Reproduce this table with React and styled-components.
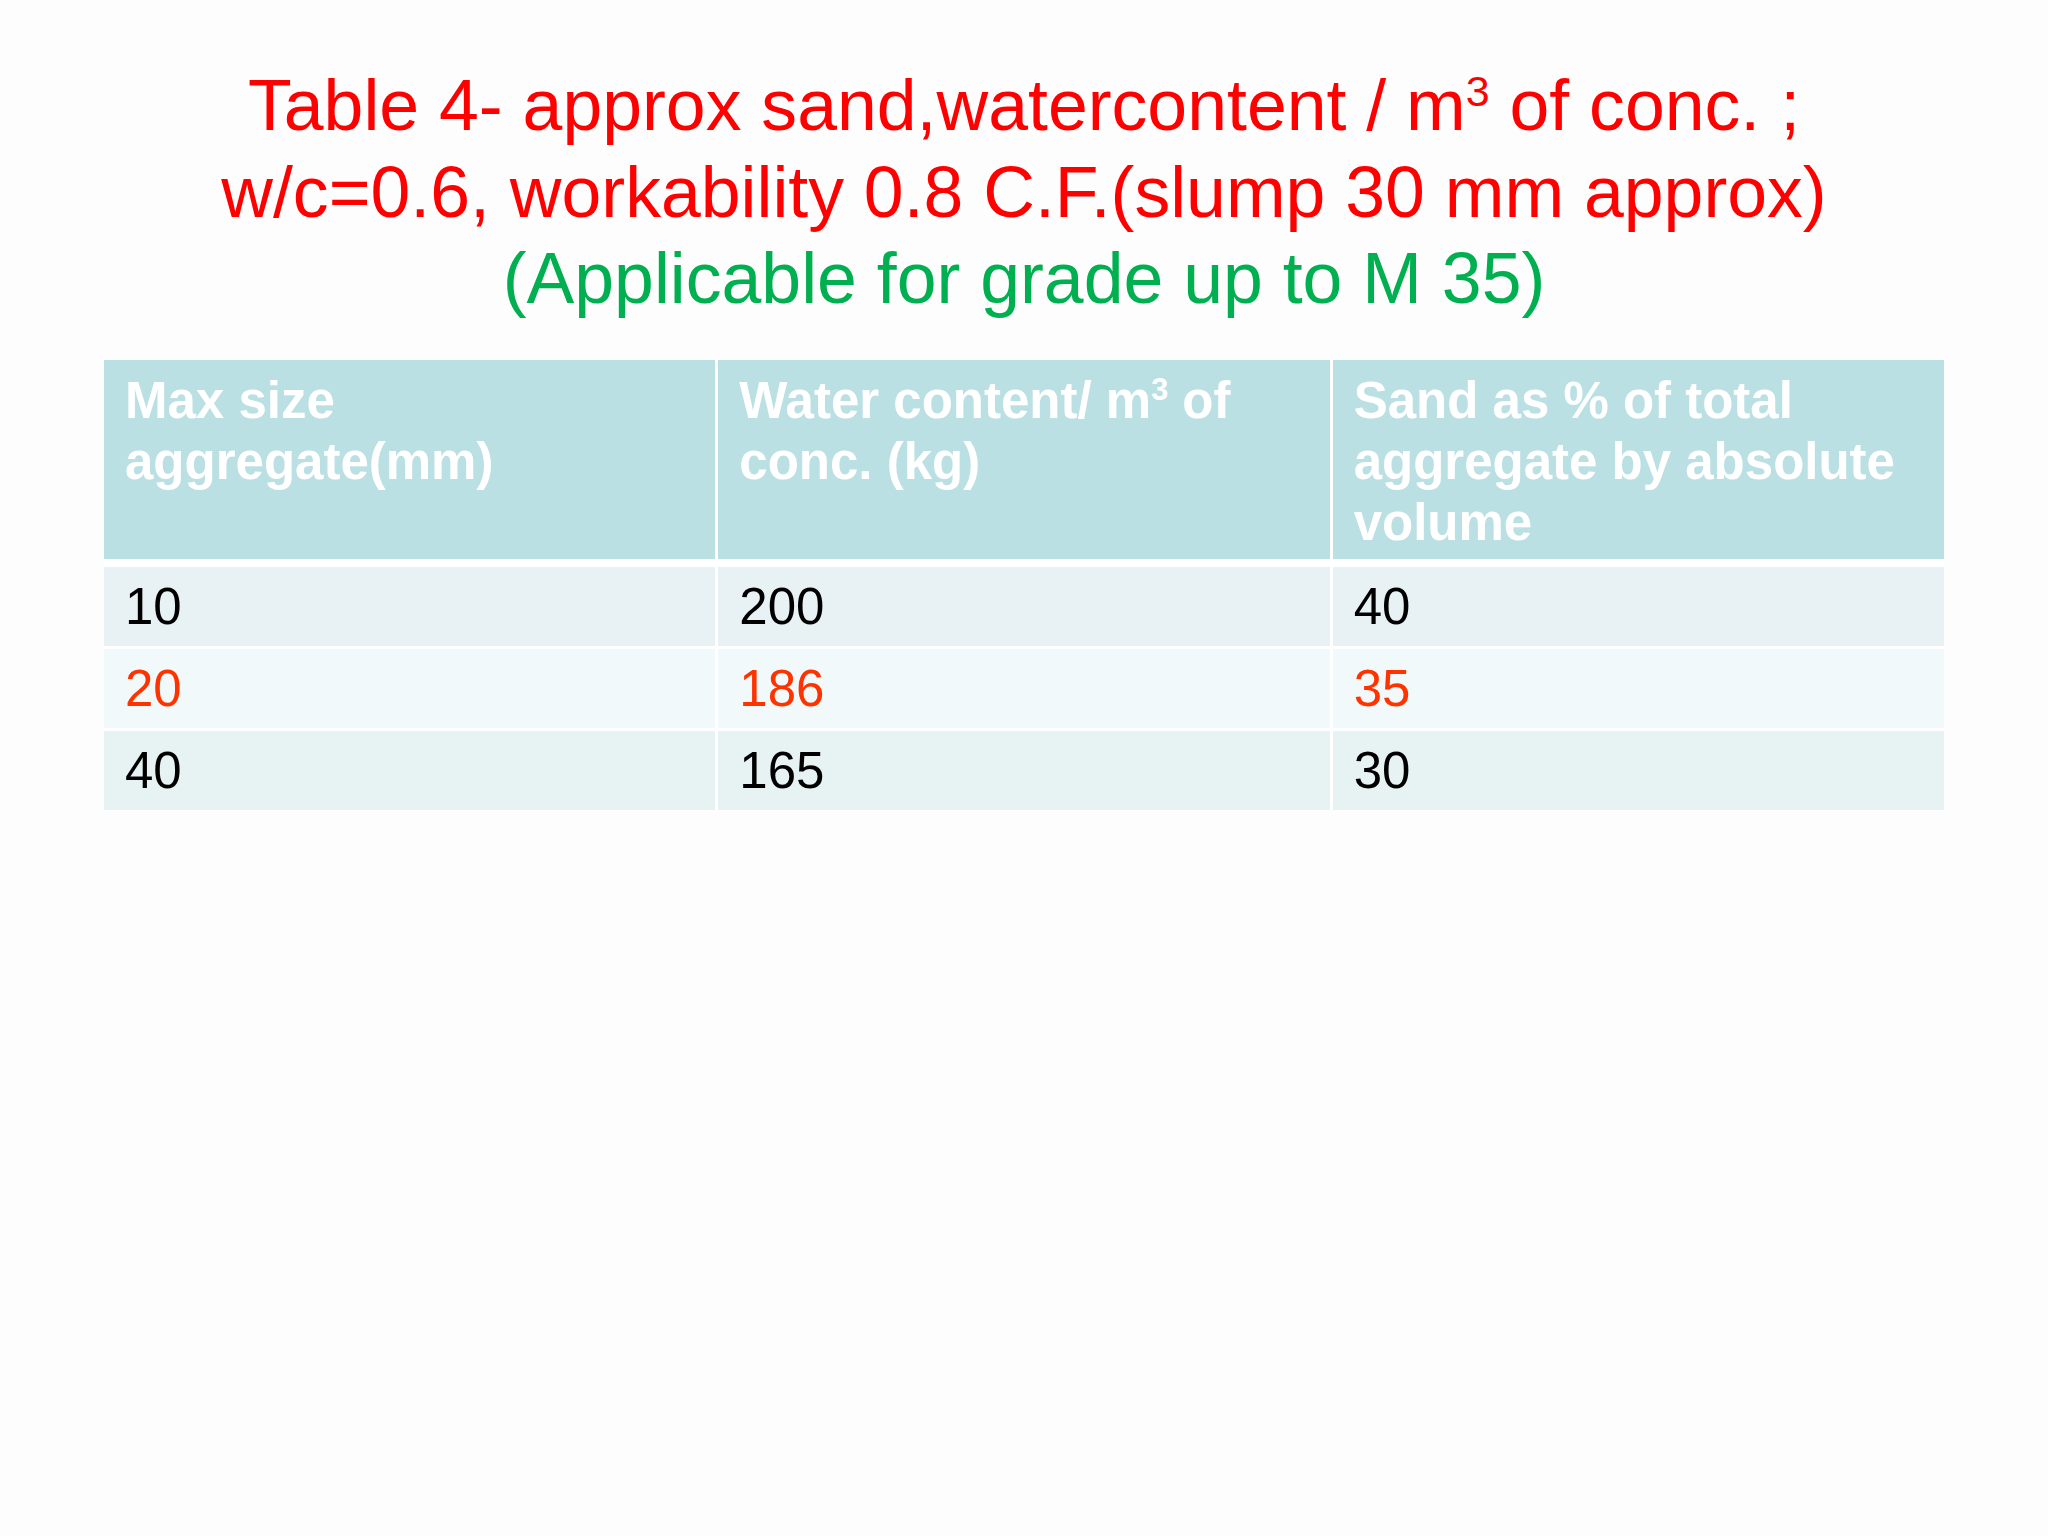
import React from "react";
import styled, { createGlobalStyle } from "styled-components";

const Global = createGlobalStyle`
  html, body { margin: 0; padding: 0; background: #fdfdfd; }
  body { font-family: "Liberation Sans", Arial, sans-serif; }
`;

const Slide = styled.div`
  width: 2048px;
  height: 1536px;
  box-sizing: border-box;
  padding: 62px 104px 0 104px;
  background: #fdfdfd;
  display: flex;
  flex-direction: column;
`;

const Title = styled.h1`
  margin: 0;
  font-family: "Liberation Sans", Arial, sans-serif;
  font-weight: 400;
  font-size: 71.6px;
  line-height: 86.5px;
  text-align: center;
`;

const TitleLine = styled.span`
  display: block;
  color: ${(p) => p.$color};
`;

const Sup = styled.sup`
  font-size: 0.6em;
  line-height: 0;
  vertical-align: 0.55em;
`;

const Grid = styled.div`
  margin-top: 38px;
  display: grid;
  grid-template-columns: repeat(3, 1fr);
  column-gap: 3px;
  row-gap: 3px;
  background: #ffffff;
`;

const HeadCell = styled.div`
  background: #bbe0e3;
  color: #ffffff;
  font-weight: 700;
  font-size: 51px;
  line-height: 61px;
  padding: 10px 20px 6px 21px;
  min-height: 183px;
  margin-bottom: 5px;
`;

const Cell = styled.div`
  background: ${(p) => p.$bg};
  color: ${(p) => p.$color};
  font-size: 51px;
  line-height: 61px;
  padding: 9px 20px 9px 21px;
`;

const HeadSup = styled.sup`
  font-size: 0.6em;
  line-height: 0;
  vertical-align: 0.6em;
  font-weight: 700;
`;

const rows = [
  { v: ["10", "200", "40"], bg: "#e8f1f4", color: "#000000" },
  { v: ["20", "186", "35"], bg: "#f2f9fa", color: "#ff3300" },
  { v: ["40", "165", "30"], bg: "#e7f2f2", color: "#000000" },
];

export default function App() {
  return (
    <>
      <Global />
      <Slide>
        <Title>
          <TitleLine $color="#ff0000">
            Table 4- approx sand,watercontent / m<Sup>3</Sup> of conc. ;
          </TitleLine>
          <TitleLine $color="#ff0000">
            w/c=0.6, workability 0.8 C.F.(slump 30 mm approx)
          </TitleLine>
          <TitleLine $color="#00b050">(Applicable for grade up to M 35)</TitleLine>
        </Title>
        <Grid>
          <HeadCell>Max size aggregate(mm)</HeadCell>
          <HeadCell>
            Water content/ m<HeadSup>3</HeadSup> of conc. (kg)
          </HeadCell>
          <HeadCell>Sand as % of total aggregate by absolute volume</HeadCell>
          {rows.map((r, i) =>
            r.v.map((val, j) => (
              <Cell key={`${i}-${j}`} $bg={r.bg} $color={r.color}>
                {val}
              </Cell>
            ))
          )}
        </Grid>
      </Slide>
    </>
  );
}
